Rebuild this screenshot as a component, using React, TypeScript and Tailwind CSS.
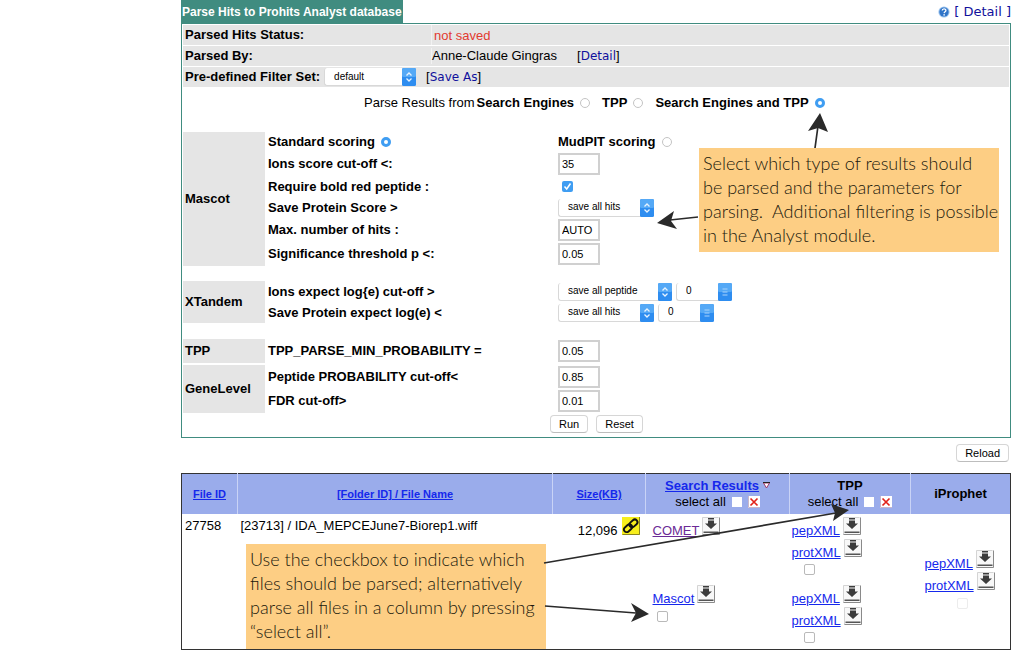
import React, { useId } from "react";

const linkBlue = "text-[#1528ec] underline";
const plainLink = "font-['DejaVu_Sans',sans-serif] text-[12px] text-[#10109c]";

function HelpIcon() {
  return (
    <svg viewBox="0 0 12 12" className="h-3 w-3" aria-hidden="true">
      <circle cx="6" cy="6" r="5.6" fill="#9cc4ee" />
      <circle cx="6" cy="6" r="4.6" fill="#2f74c8" />
      <path d="M4.2 4.6c0-2.4 3.7-2.3 3.7-.2 0 1.3-1.7 1.3-1.8 2.7" fill="none" stroke="#fff" strokeWidth="1.3" />
      <circle cx="6.1" cy="8.9" r=".8" fill="#fff" />
    </svg>
  );
}

function DownloadIcon() {
  return (
    <svg viewBox="0 0 18 18" className="h-[18px] w-[18px]" aria-hidden="true">
      <rect width="18" height="18" fill="#f8f8f8" />
      <path d="M.5 17.5V.5h16" fill="none" stroke="#d4d4d4" />
      <path d="M.5 17.5h17V.5" fill="none" stroke="#8a8a8a" />
      <path d="M6 1h6v1.500H6zM6 3.500h6v3h3L9 12 3 6.500h3z" fill="#3c3c3c" />
      <path d="M1.500 14.500h15v1.500h-15z" fill="#555" />
    </svg>
  );
}

function LinkIcon() {
  return (
    <svg viewBox="0 0 18 18" className="h-[18px] w-[18px]" aria-hidden="true">
      <rect width="18" height="18" fill="#f7ee1c" />
      <path d="M.5 17.500h17V0" fill="none" stroke="#8a8520" />
      <g fill="none" stroke="#111" strokeWidth="1.900" transform="rotate(-42 9 9)">
        <rect x="0.800" y="6" width="9" height="5.400" rx="2.700" />
        <rect x="8" y="6" width="9" height="5.400" rx="2.700" />
      </g>
    </svg>
  );
}

function ClearButton({ label }: { label: string }) {
  return (
    <button type="button" aria-label={label} className="h-3 w-3 bg-white">
      <svg viewBox="0 0 12 12" className="block h-3 w-3">
        <path d="M.5 0v11.500H12" fill="none" stroke="#c9b6c9" />
        <path d="M2.500 2.500l7 7M9.500 2.500l-7 7" stroke="#e2231a" strokeWidth="1.700" />
      </svg>
    </button>
  );
}

function Radio({ label, name, checked }: { label: string; name: string; checked?: boolean }) {
  return (
    <label className="flex items-center gap-[6px]">
      <span className="font-bold">{label}</span>
      <input
        type="radio"
        name={name}
        defaultChecked={checked}
        className="h-[10px] w-[10px] appearance-none rounded-full border border-[#c4c4c4] bg-white checked:border-[3px] checked:border-[#3f9df2]"
      />
    </label>
  );
}

function Picker({ id, label, option, width, up }: { id?: string; label: string; option: string; width: string; up?: boolean }) {
  return (
    <span className={`relative inline-flex h-[18px] ${width}`}>
      <select
        id={id}
        aria-label={label}
        className="h-[18px] w-full appearance-none rounded-[3px] border-b border-l border-[#d8d8d8] bg-white pl-[9px] text-[10px] leading-4 text-black"
      >
        <option>{option}</option>
      </select>
      <svg viewBox="0 0 14 18" className="pointer-events-none absolute right-0 top-0 h-[18px] w-[14px]" aria-hidden="true">
        <rect width="14" height="18" rx="1.500" fill="#2e8df0" />
        <rect width="14" height="9" rx="1.500" fill="#55a9f6" />
        {up ? (
          <path d="M4.500 6h5M4.500 9h5M4.500 12h5" stroke="#a9d3fb" />
        ) : (
          <path d="M4.500 7.500L7 5l2.500 2.500M4.500 10.500L7 13l2.500-2.500" fill="none" stroke="#e6f3ff" strokeWidth="1.300" />
        )}
      </svg>
    </span>
  );
}

function TextBox({ id, value }: { id: string; value: string }) {
  return (
    <input
      id={id}
      type="text"
      defaultValue={value}
      className="h-[22px] w-[42px] border-2 border-[#d0d0d0] bg-white pl-[2px] text-[11px] leading-4 text-black"
    />
  );
}

function Param({ label, height, children }: { label: string; height: string; children: (id: string) => React.ReactNode }) {
  const id = useId();
  return (
    <div className={`flex items-center ${height}`}>
      <label htmlFor={id} className="w-[290px] shrink-0 font-bold">
        {label}
      </label>
      <div className="flex items-center gap-1">{children(id)}</div>
    </div>
  );
}

function Section({ title, children }: { title: string; children: React.ReactNode }) {
  return (
    <section className="flex">
      <h2 className="flex w-[82px] shrink-0 items-center bg-[#e5e5e5] pl-[2px] font-bold">{title}</h2>
      <div className="grow pl-[3px]">{children}</div>
    </section>
  );
}

function PushButton({ children }: { children: string }) {
  return (
    <button
      type="button"
      className="h-[18px] rounded-[4px] border border-[#d6d6d6] border-b-[#bdbdbd] bg-white px-2 text-[11px] leading-4 text-black"
    >
      {children}
    </button>
  );
}

function FileLink({ text, visited }: { text: string; visited?: boolean }) {
  return (
    <div className="flex h-[22px] items-baseline gap-[3px] pt-[2px]">
      <a href="#file" className={visited ? "text-[#6b2a96] underline" : linkBlue}>
        {text}
      </a>
      <a href="#download" aria-label={`Download ${text}`} className="flex items-baseline">
        <DownloadIcon />
      </a>
    </div>
  );
}

function Tick({ label, faint }: { label: string; faint?: boolean }) {
  return (
    <input
      type="checkbox"
      aria-label={label}
      className={`block h-[11px] w-[11px] appearance-none rounded-[2px] border bg-white ${faint ? "border-[#ececec]" : "border-[#b9b9b9]"}`}
    />
  );
}

function XmlGroup({ label, faint }: { label: string; faint?: boolean }) {
  return (
    <div>
      <FileLink text="pepXML" />
      <FileLink text="protXML" />
      <div className={`flex h-[22px] items-center ${faint ? "pl-8" : "pl-3"}`}>
        <Tick label={label} faint={faint} />
      </div>
    </div>
  );
}

function SelectAll({ label }: { label: string }) {
  return (
    <div className="flex items-center justify-center gap-[6px] font-normal">
      <label className="flex items-center gap-[6px]">
        select all
        <input type="checkbox" aria-label={`Select all ${label}`} className="h-[10px] w-[10px] appearance-none bg-white" />
      </label>
      <ClearButton label={`Clear ${label}`} />
    </div>
  );
}

export default function App() {
  return (
    <div className="min-h-screen bg-white pl-[181px] pr-[21px] font-['Liberation_Sans',Arial,sans-serif] text-[13px] leading-4 text-black">
      <main className="relative">
        <header className="flex items-center justify-between">
          <h1 className="flex h-[23px] items-center bg-[#408c80] px-px text-[12px] font-bold text-white">
            Parse Hits to Prohits Analyst database
          </h1>
          <a href="#help" className="flex items-center gap-1 font-['DejaVu_Sans',sans-serif] text-[13px] text-[#10109c]">
            <HelpIcon />[ Detail ]
          </a>
        </header>

        <form className="border border-[#408c80] p-px pb-1" onSubmit={(e) => e.preventDefault()}>
          <dl className="flex flex-col gap-px">
            <div className="flex h-5 items-center bg-[#e5e5e5]">
              <dt className="w-[248px] pl-[2px] font-bold">Parsed Hits Status:</dt>
              <dd className="self-stretch border-l border-[#f2f2f2] pl-[2px] pt-[3px] text-[#e23a30]">not saved</dd>
            </div>
            <div className="flex h-5 items-center bg-[#e5e5e5]">
              <dt className="w-[248px] pl-[2px] font-bold">Parsed By:</dt>
              <dd className="flex gap-5 border-l border-[#f2f2f2]">
                Anne-Claude Gingras
                <span>
                  [
                  <a href="#detail" className={plainLink}>
                    Detail
                  </a>
                  ]
                </span>
              </dd>
            </div>
            <div className="flex h-5 items-center bg-[#e5e5e5]">
              <dt className="pl-[2px] font-bold">
                <label htmlFor="filter-set">Pre-defined Filter Set:</label>
              </dt>
              <dd className="flex items-center gap-[10px] pl-1">
                <Picker id="filter-set" label="Pre-defined Filter Set" option="default" width="w-[92px]" />
                <span>
                  [
                  <a href="#save" className={plainLink}>
                    Save As
                  </a>
                  ]
                </span>
              </dd>
            </div>
          </dl>

          <fieldset className="flex h-8 items-center pl-[181px]">
            <span className="mr-[2px]">Parse Results from</span>
            <div className="flex gap-3">
              <Radio name="source" label="Search Engines" />
              <Radio name="source" label="TPP" />
              <Radio name="source" label="Search Engines and TPP" checked />
            </div>
          </fieldset>

          <div className="pt-[13px]">
            <Section title="Mascot">
              <div className="flex h-5 items-center">
                <div className="w-[290px]">
                  <Radio name="scoring" label="Standard scoring" checked />
                </div>
                <Radio name="scoring" label="MudPIT scoring" />
              </div>
              <Param label="Ions score cut-off <:" height="h-6">{(id) => <TextBox id={id} value="35" />}</Param>
              <Param label="Require bold red peptide :" height="h-[21px]">
                {(id) => (
                  <span className="relative ml-1 flex h-[11px] w-[11px]">
                    <input id={id} type="checkbox" defaultChecked className="h-[11px] w-[11px] appearance-none rounded-[2px] bg-[#3f9df2]" />
                    <svg viewBox="0 0 11 11" className="pointer-events-none absolute inset-0" aria-hidden="true">
                      <path d="M2.500 5.500l2.200 2.500L8.500 2.500" fill="none" stroke="#fff" strokeWidth="1.500" />
                    </svg>
                  </span>
                )}
              </Param>
              <Param label="Save Protein Score >" height="h-[21px]">
                {(id) => <Picker id={id} label="Save Protein Score" option="save all hits" width="w-24" />}
              </Param>
              <Param label="Max. number of hits :" height="h-6">{(id) => <TextBox id={id} value="AUTO" />}</Param>
              <Param label="Significance threshold p <:" height="h-6">{(id) => <TextBox id={id} value="0.05" />}</Param>
            </Section>
          </div>

          <div className="pb-4 pt-[15px]">
            <Section title="XTandem">
              <Param label="Ions expect log{e) cut-off >" height="h-[21px]">
                {(id) => (
                  <>
                    <Picker id={id} label="Ions expect" option="save all peptide" width="w-[114px]" />
                    <Picker label="Ions expect value" option="0" width="w-[56px]" up />
                  </>
                )}
              </Param>
              <Param label="Save Protein expect log(e) <" height="h-[21px]">
                {(id) => (
                  <>
                    <Picker id={id} label="Save Protein expect" option="save all hits" width="w-24" />
                    <Picker label="Save Protein expect value" option="0" width="w-[56px]" up />
                  </>
                )}
              </Param>
            </Section>
          </div>

          <div className="flex flex-col gap-[2px]">
            <Section title="TPP">
              <Param label="TPP_PARSE_MIN_PROBABILITY =" height="h-6">{(id) => <TextBox id={id} value="0.05" />}</Param>
            </Section>
            <Section title="GeneLevel">
              <Param label="Peptide PROBABILITY cut-off<" height="h-6">{(id) => <TextBox id={id} value="0.85" />}</Param>
              <Param label="FDR cut-off>" height="h-6">{(id) => <TextBox id={id} value="0.01" />}</Param>
            </Section>
          </div>

          <div className="flex gap-2 pl-[367px] pt-[2px]">
            <PushButton>Run</PushButton>
            <PushButton>Reset</PushButton>
          </div>
        </form>

        <div className="flex h-[35px] items-center justify-end pb-[6px] pr-[2px]">
          <PushButton>Reload</PushButton>
        </div>

        <table className="w-full table-fixed border-collapse border border-[#333]">
          <colgroup>
            <col className="w-[56px]" />
            <col className="w-[315px]" />
            <col className="w-[93px]" />
            <col className="w-[144px]" />
            <col className="w-[121px]" />
            <col />
          </colgroup>
          <thead>
            <tr className="h-10 bg-[#9aaceb] [&>th]:border-r [&>th]:border-[#c9d3f6] [&>th]:p-0 [&>th:last-child]:border-[#333]">
              <th className="text-[11px]">
                <a href="#id" className={linkBlue}>File ID</a>
              </th>
              <th className="text-[11px]">
                <a href="#name" className={linkBlue}>[Folder ID] / File Name</a>
              </th>
              <th className="text-[11px]">
                <a href="#size" className={linkBlue}>Size(KB)</a>
              </th>
              <th>
                <div className="flex items-center justify-center gap-1">
                  <a href="#results" className={linkBlue}>Search Results</a>
                  <svg viewBox="0 0 7 7" className="h-[7px] w-[7px]" aria-hidden="true">
                    <path d="M.5 1h6L3.500 6z" fill="#fff" stroke="#a03a6a" />
                    <path d="M0 .500h7" stroke="#222" />
                  </svg>
                </div>
                <SelectAll label="search results" />
              </th>
              <th>
                <div>TPP</div>
                <SelectAll label="TPP" />
              </th>
              <th>iProphet</th>
            </tr>
          </thead>
          <tbody>
            <tr className="h-[136px] align-top [&>td]:p-0">
              <td>
                <div className="pl-[3px] pt-1">27758</div>
              </td>
              <td>
                <div className="pl-[3px] pt-1">[23713] / IDA_MEPCEJune7-Biorep1.wiff</div>
              </td>
              <td>
                <div className="flex items-baseline justify-end gap-1 pr-[6px] pt-[3px]">
                  12,096 <LinkIcon />
                </div>
              </td>
              <td>
                <div className="flex flex-col gap-[46px] pl-[7px] pt-px">
                  <FileLink text="COMET" visited />
                  <div>
                    <FileLink text="Mascot" />
                    <div className="pl-1 pt-[6px]">
                      <Tick label="Parse Mascot results" />
                    </div>
                  </div>
                </div>
              </td>
              <td>
                <div className="flex flex-col gap-[2px] pl-[2px] pt-px">
                  <XmlGroup label="Parse COMET TPP results" />
                  <XmlGroup label="Parse Mascot TPP results" />
                </div>
              </td>
              <td className="align-middle">
                <div className="pl-[14px]">
                  <XmlGroup label="Parse iProphet results" faint />
                </div>
              </td>
            </tr>
          </tbody>
        </table>

        <aside className="absolute left-[518px] top-[148px] h-[104px] w-[300px] bg-[#fdce84] pl-1 pt-[3px] font-['Lato',sans-serif] text-[18px] font-light leading-6 text-[#20180c]">
          <p className="whitespace-pre">
            {"Select which type of results should\nbe parsed and the parameters for\nparsing.  Additional filtering is possible\nin the Analyst module."}
          </p>
        </aside>
        <aside className="absolute left-[65px] top-[544px] h-[105px] w-[300px] bg-[#fdce84] pl-1 pt-[3px] font-['Lato',sans-serif] text-[18px] font-light leading-6 text-[#20180c]">
          <p className="whitespace-pre">
            {"Use the checkbox to indicate which\nfiles should be parsed; alternatively\nparse all files in a column by pressing\n“select all”."}
          </p>
        </aside>

        <svg
          viewBox="181 0 830 650"
          className="pointer-events-none absolute left-0 top-0 h-[650px] w-[830px]"
          aria-hidden="true"
          fill="#2a2a2a"
          stroke="#2a2a2a"
          strokeWidth="1.700"
        >
          <path d="M815 148L818 126M698 217L670 220M544 563L836 513M545 606L636 613" fill="none" />
          <g stroke="none">
            <path d="M820 113L828 132L818 128L808 131Z" />
            <path d="M657 223L674 211L671 221L677 229Z" />
            <path d="M849 510L831 504L835 513L833 521Z" />
            <path d="M649 614L631 603L636 613L631 622Z" />
          </g>
        </svg>
      </main>
    </div>
  );
}
